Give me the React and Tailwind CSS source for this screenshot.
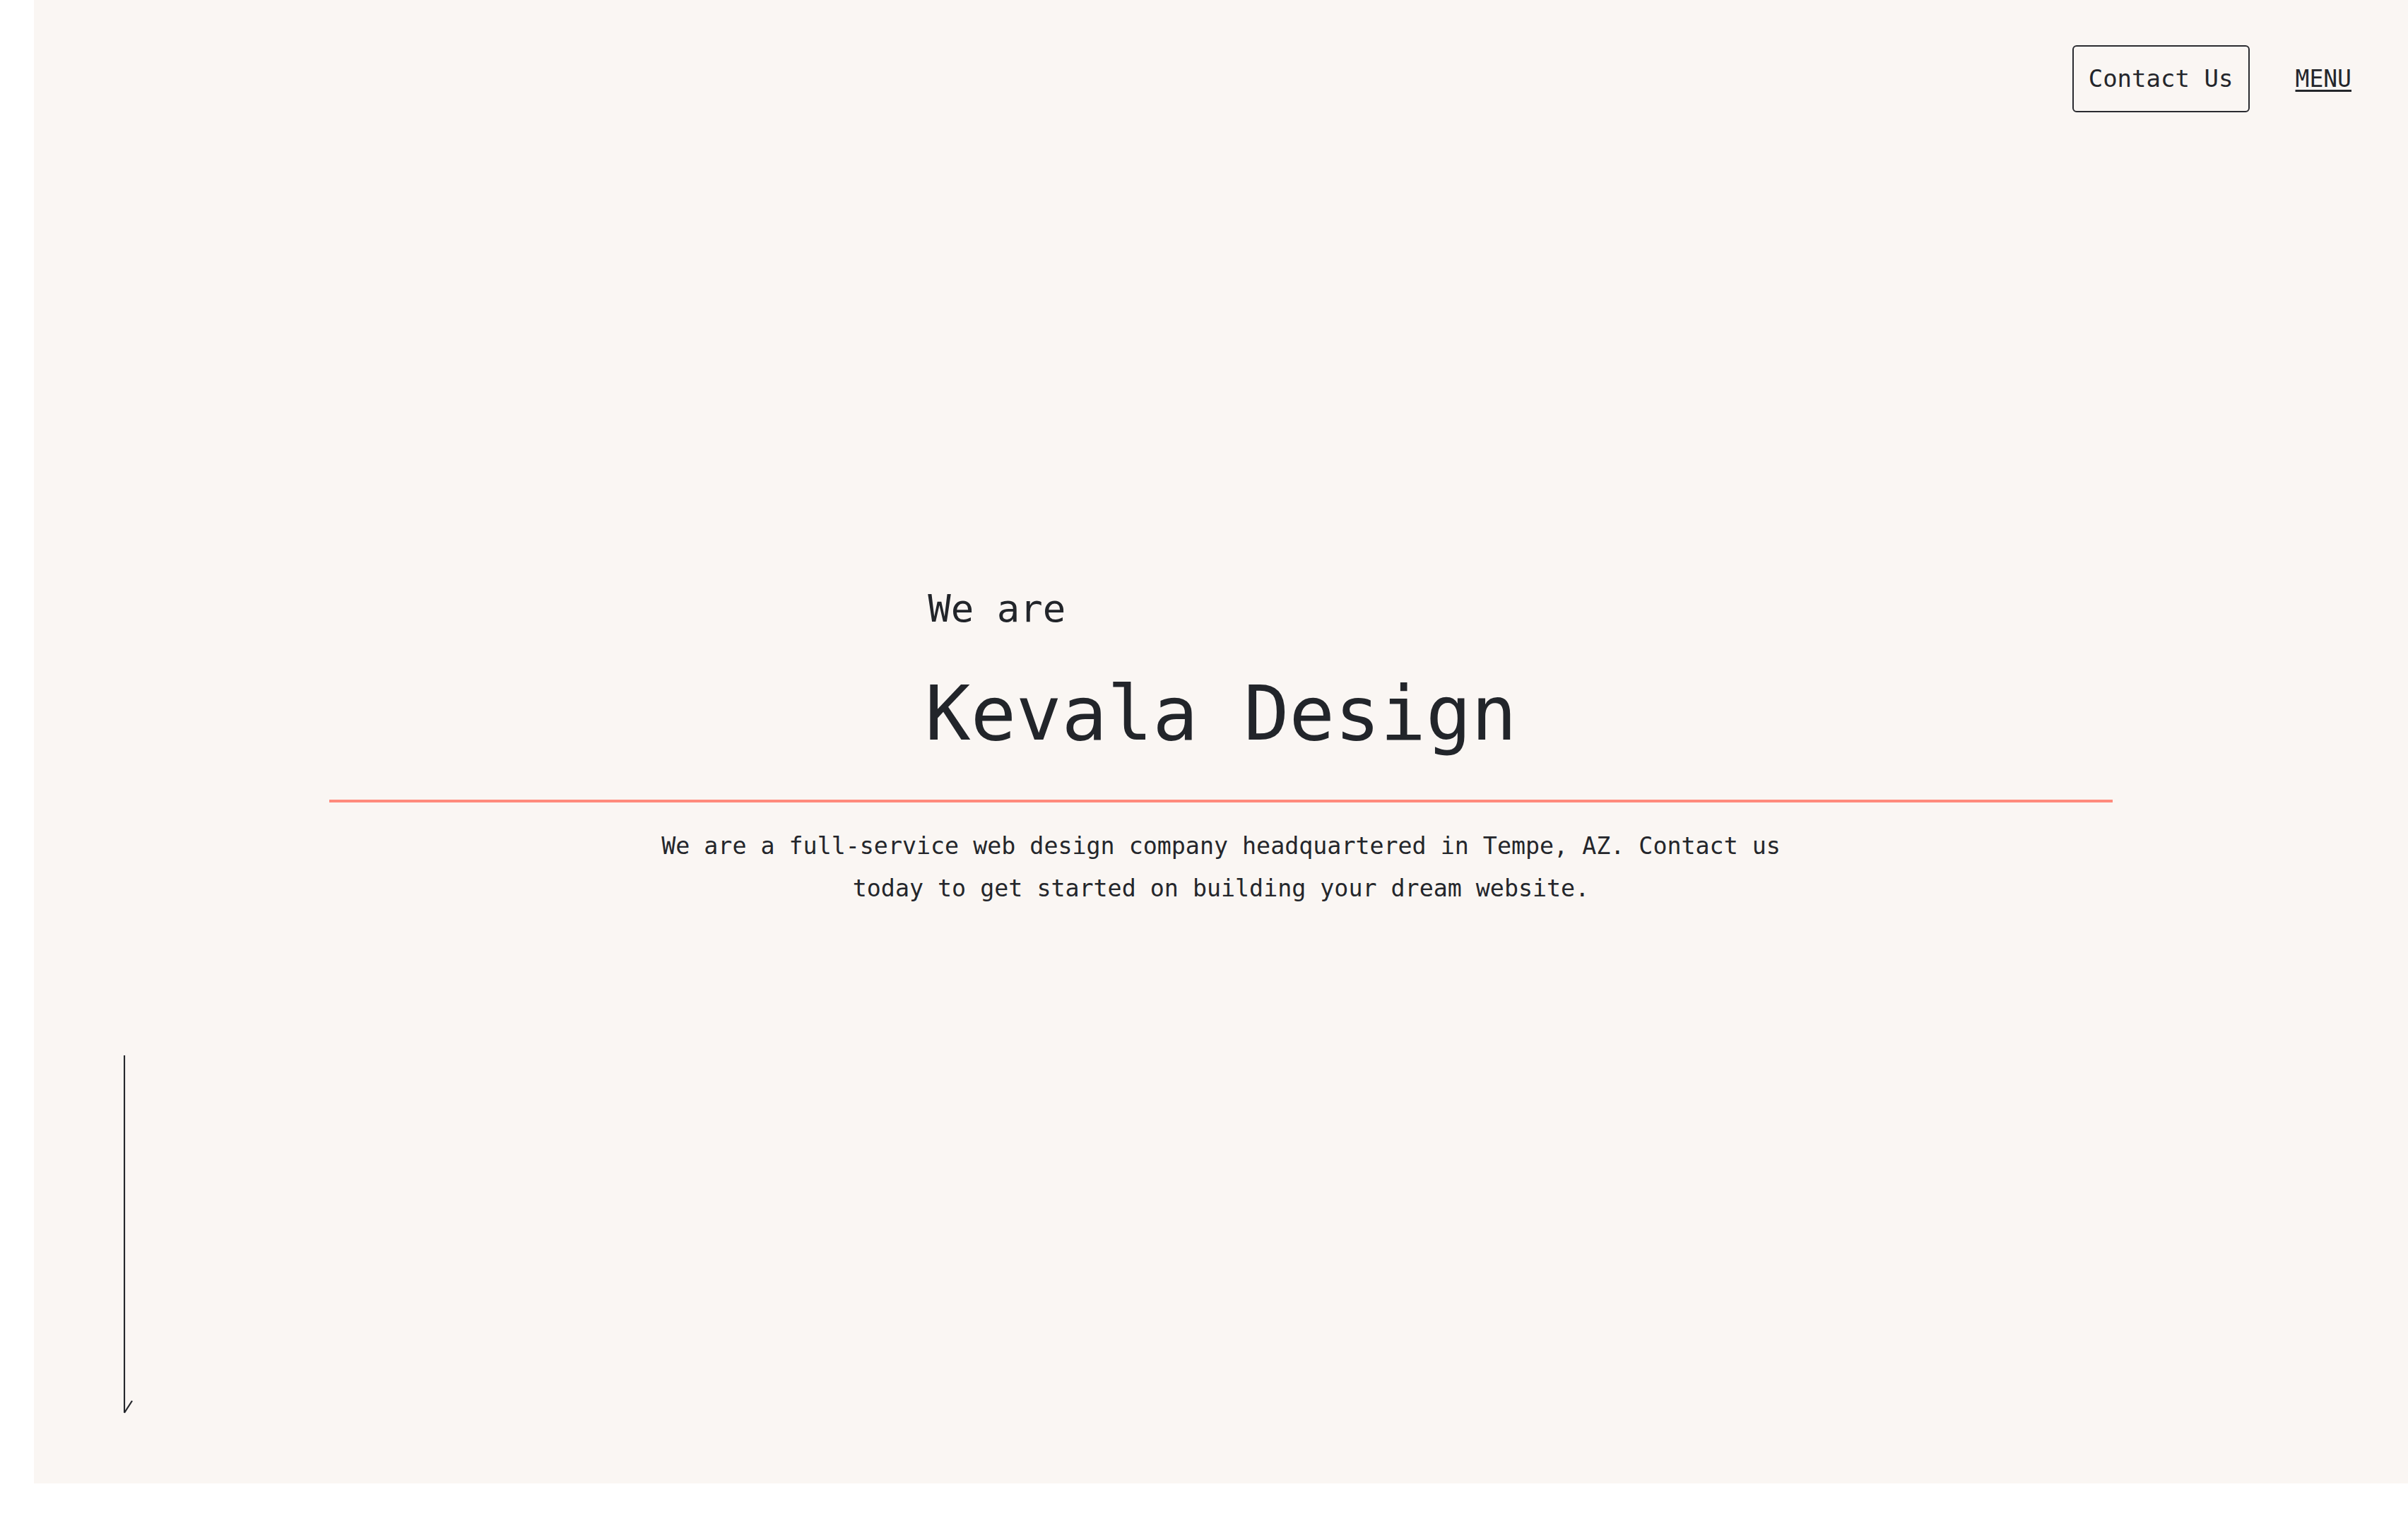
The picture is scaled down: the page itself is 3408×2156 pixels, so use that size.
const mono = "font-['DejaVu_Sans_Mono','Liberation_Mono',monospace]";

function Header() {
  return (
    <header className="flex items-center justify-end gap-[65px] pr-[80px] pt-[64px]">
      <a
        href="#contact"
        className="flex h-[95px] w-[251px] items-center justify-center rounded-[6px] border-2 border-[#2a2b30] text-[34px] text-[#24262b]"
      >
        Contact Us
      </a>
      <a
        href="#menu"
        className="text-[33px] leading-[95px] text-[#24262b] underline decoration-[3px] underline-offset-4"
      >
        MENU
      </a>
    </header>
  );
}

function Hero() {
  return (
    <section className="mt-[671px] flex flex-col items-center">
      <div className="text-left text-[#22252a]">
        <p className="ml-[4px] text-[54px] leading-[64px]">We are</p>
        <h1 className="mt-[56px] text-[107px] leading-[120px]">Kevala Design</h1>
      </div>
      <div className="mt-[62px] h-[4px] w-[2524px] bg-[#ff8a7c]" />
      <p className="mt-[32px] max-w-[80ch] text-center text-[33.3px] leading-[60px] text-[#24262b]">
        We are a full-service web design company headquartered in Tempe, AZ. Contact us today to get started on
        building your dream website.
      </p>
    </section>
  );
}

function ScrollArrow() {
  return (
    <div className="mt-auto pb-[99px] pl-[127px]">
      <svg width="16" height="507" viewBox="0 0 16 507" fill="none" stroke="#24262b" strokeWidth="2.2">
        <line x1="1" y1="0" x2="1" y2="506" />
        <line x1="1" y1="506" x2="12" y2="489" />
      </svg>
    </div>
  );
}

export default function App() {
  return (
    <div className={`min-h-screen bg-white pl-[48px] ${mono}`}>
      <main className="flex h-[2100px] flex-col bg-[#faf6f3]">
        <Header />
        <Hero />
        <ScrollArrow />
      </main>
    </div>
  );
}
